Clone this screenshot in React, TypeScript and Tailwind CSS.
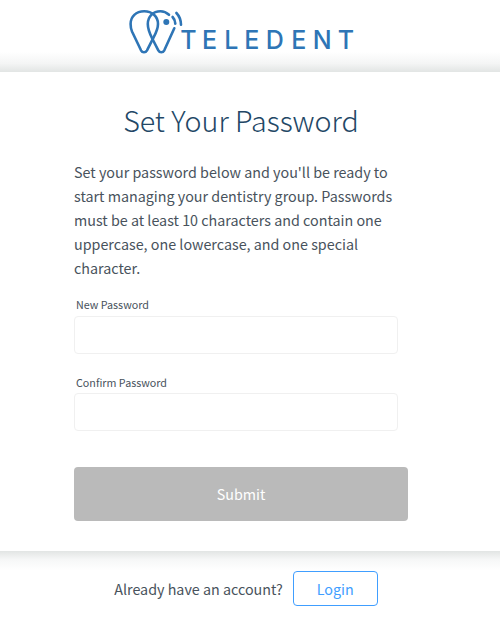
import { useState } from 'react';

function Logo() {
  return (
    <svg width="228" height="48" viewBox="0 0 228 48" role="img" aria-label="Teledent">
      <g fill="none" stroke="#2e75b6" strokeWidth="2.6" strokeLinecap="round" strokeLinejoin="round">
        <path d="M17.2 5.3 C25 5.3 31 10.5 31 18 C31 24 28 28.5 25.6 33.3 L20 44.3 C18.6 46.9 15.4 46.9 14 44.3 L5 25.5 C3.9 23 3.6 20.5 3.6 18 C3.6 10.5 9 5.3 17.2 5.3 Z" />
        <path d="M42 8.8 C39.5 6.5 36.5 5.3 33.5 5.3 C26 5.3 20.8 10.5 20.8 18 C20.8 24 23 28 25.6 33.3 L31.3 44.3 C32.7 46.9 35.9 46.9 37.3 44.3 L47.3 22.3" />
        <path d="M45.6 11 C47.3 12.8 48.2 15 48.3 17.6" />
        <path d="M49.4 7 C52.3 10 53.9 14 54 18.8" />
      </g>
      <circle cx="39.3" cy="16" r="3" fill="#2e75b6" />
      <text
        x="53.3 75 97.3 117.2 138.8 164.3 185.8 210.8"
        y="43.3"
        fill="#2e75b6"
        fontFamily="Inter, sans-serif"
        fontSize="25"
        fontWeight="500"
      >
        TELEDENT
      </text>
    </svg>
  );
}

interface PasswordFieldProps {
  label: string;
  value: string;
  onChange: (value: string) => void;
}

function PasswordField({ label, value, onChange }: PasswordFieldProps) {
  return (
    <label className="block">
      <span className="block h-[20.7px] pl-0.5 text-[10.74px] leading-[19px]">{label}</span>
      <input
        type="password"
        value={value}
        onChange={(e) => onChange(e.target.value)}
        className="block h-[38px] w-[324px] rounded border border-[#f0f0f0] bg-white px-3 outline-none focus:border-[#409eff]"
      />
    </label>
  );
}

export default function App() {
  const [password, setPassword] = useState('');
  const [confirm, setConfirm] = useState('');

  return (
    <div className="flex h-[621px] w-full flex-col overflow-hidden bg-white font-['Noto_Sans_CJK_SC',sans-serif] text-[#48525c]">
      <header className="flex h-[72px] shrink-0 justify-center bg-linear-to-b from-white from-72% via-[#f4f5f5] via-88% to-[#e2e5e4] pt-[6px] pr-[18px]">
        <Logo />
      </header>

      {/* Password form */}
      <main className="h-[479px] shrink-0 bg-white pr-[92px] pl-[74px]">
        <h1 className="pt-6 text-center text-[28.65px] leading-[48px] font-light whitespace-nowrap text-[#234766]">
          Set Your Password
        </h1>
        <p className="mt-4 text-[14.32px] leading-6 whitespace-nowrap">
          Set your password below and you'll be ready to
          <br />
          start managing your dentistry group. Passwords
          <br />
          must be at least 10 characters and contain one
          <br />
          uppercase, one lowercase, and one special
          <br />
          character.
        </p>
        <form className="mt-[15.3px]" onSubmit={(e) => e.preventDefault()}>
          <PasswordField label="New Password" value={password} onChange={setPassword} />
          <div className="mt-[18.6px]">
            <PasswordField label="Confirm Password" value={confirm} onChange={setConfirm} />
          </div>
          <button
            type="submit"
            className="mt-[35.7px] flex h-[54px] w-full items-center justify-center rounded bg-[#bababa] text-[14.32px] text-white"
          >
            Submit
          </button>
        </form>
      </main>

      <footer className="flex grow items-start justify-center gap-[10px] bg-linear-to-b from-[#e2e5e4] via-[#f6f7f7] via-12% to-white to-28% pt-5 pr-2">
        <span className="text-[14.32px] leading-[35px]">Already have an account?</span>
        <button
          type="button"
          className="flex h-[35px] w-[85px] items-center justify-center rounded border border-[#409eff] bg-white pt-px text-[14.32px] text-[#409eff]"
        >
          Login
        </button>
      </footer>
    </div>
  );
}
